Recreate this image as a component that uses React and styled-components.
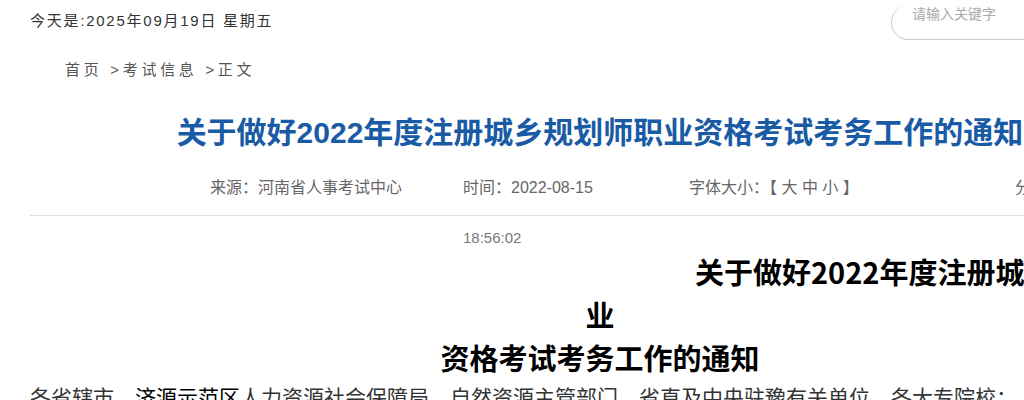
import React from 'react';
import styled, { createGlobalStyle } from 'styled-components';

/* ****************** */
/* Styled Components */
/* ****************** */
const GlobalStyle = createGlobalStyle`
    html, body {
        margin: 0;
        padding: 0;
        background: #fff;
        overflow: hidden;
    }
    body {
        font-family: "Liberation Sans", "Noto Sans CJK SC", sans-serif;
        color: #333;
    }
`;

const Page = styled.div`
    width: 1200px;
`;

const TopBar = styled.div`
    display: grid;
    grid-template-columns: 861px 240px;
    height: 42px;
    padding-left: 30px;
`;

const Today = styled.div`
    font-size: 15px;
    line-height: 42px;
    letter-spacing: 1.75px;
    color: #333;
`;

const SearchBox = styled.div`
    margin-top: 5px;
    height: 35px;
    border-left: 1px solid #ccc;
    border-bottom: 1px solid #ccc;
    border-radius: 20px 0 0 20px;
    box-sizing: border-box;
`;

const SearchInput = styled.input`
    display: block;
    border: none;
    outline: none;
    background: transparent;
    width: 180px;
    height: 16px;
    padding: 0 0 0 20px;
    margin-top: 1px;
    font-family: "Liberation Sans", "Noto Sans CJK SC", sans-serif;
    font-size: 14px;
    line-height: 16px;
    color: #333;

    &::placeholder {
        color: #aaa;
    }
`;

const Crumbs = styled.div`
    margin-top: 18px;
    padding-left: 65px;
    font-size: 15px;
    line-height: 20px;
    letter-spacing: 3.7px;
    color: #555;
`;

const Headline = styled.h1`
    margin: 33px 0 0;
    text-align: center;
    font-size: 30px;
    line-height: 40px;
    font-weight: bold;
    color: #1a5ba6;
    white-space: nowrap;
`;

const Meta = styled.div`
    display: flex;
    margin: 10px 30px 0;
    padding-left: 180px;
    height: 52px;
    border-bottom: 1px solid #ddd;
    font-size: 16px;
    line-height: 50px;
    color: #666;
`;

const MetaItem = styled.div`
    flex: 0 0 ${props => props.$width}px;
    white-space: nowrap;
`;

const Clock = styled.div`
    color: #777;
    font-size: 15px;
`;

const Content = styled.div`
    margin: 0 30px;
`;

const TitleLine = styled.div`
    font-family: "Noto Sans CJK SC", sans-serif;
    font-size: 29px;
    line-height: 43px;
    font-weight: bold;
    color: #000;
    white-space: nowrap;
    text-align: ${props => (props.$indent ? 'left' : 'center')};
    padding-left: ${props => props.$indent || 0}px;
`;

const ArticleTitle = styled.div`
    margin-top: 34px;
`;

const Paragraph = styled.p`
    margin: 2px 0 0;
    font-family: "Noto Sans CJK SC", sans-serif;
    font-size: 21px;
    line-height: 30px;
    color: #333;
    white-space: nowrap;
`;

const Strong = styled.span`
    color: #000;
`;

/* ****************** */
/*     Component      */
/* ****************** */
class App extends React.Component {
    render() {
        return (
            <Page>
                <GlobalStyle />
                <TopBar>
                    <Today>今天是:2025年09月19日 星期五</Today>
                    <SearchBox>
                        <SearchInput placeholder="请输入关键字" />
                    </SearchBox>
                </TopBar>
                <Crumbs>首页 &gt;考试信息 &gt;正文</Crumbs>
                <Headline>关于做好2022年度注册城乡规划师职业资格考试考务工作的通知</Headline>
                <Meta>
                    <MetaItem $width={253}>来源：河南省人事考试中心</MetaItem>
                    <MetaItem $width={226}>
                        时间：2022-08-15
                        <Clock>18:56:02</Clock>
                    </MetaItem>
                    <MetaItem $width={326}>字体大小：【 大 中 小 】</MetaItem>
                    <MetaItem $width={200}>分享到：</MetaItem>
                </Meta>
                <Content>
                    <ArticleTitle>
                        <TitleLine $indent={665}>关于做好2022年度注册城乡规划师职</TitleLine>
                        <TitleLine>业</TitleLine>
                        <TitleLine>资格考试考务工作的通知</TitleLine>
                    </ArticleTitle>
                    <Paragraph>
                        各省辖市、<Strong>济源示范区</Strong>人力资源社会保障局、自然资源主管部门、省直及中央驻豫有关单位、各大专院校：
                    </Paragraph>
                </Content>
            </Page>
        );
    }
}

export default App;
